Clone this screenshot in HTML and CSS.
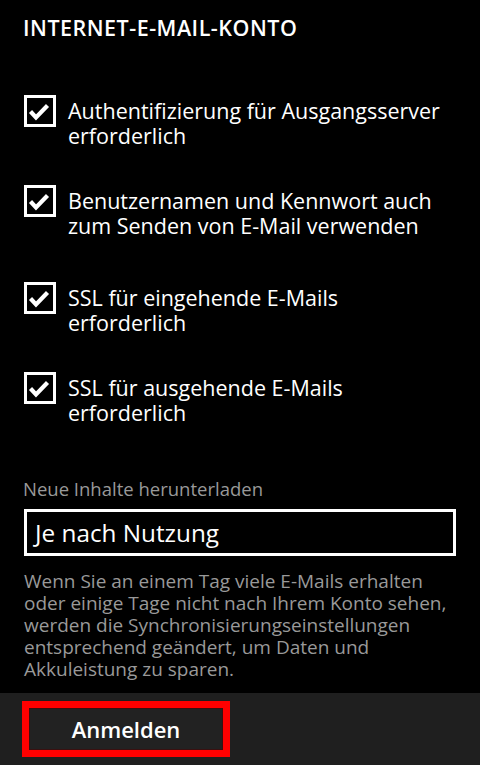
FILE: index.html
```html
<!DOCTYPE html>
<html lang="de">
<head>
<meta charset="utf-8">
<link rel="stylesheet" href="styles.css">
</head>
<body>
<div class="page">
  <h1 class="title">INTERNET-E-MAIL-KONTO</h1>
  <div class="checks">
    <div class="check">
      <span class="box"><svg viewBox="0 0 26 26" width="26" height="26"><path d="M3.5 13.5 L9 19.5 L20.5 7.5" fill="none" stroke="#fff" stroke-width="4.2"/></svg></span>
      <span class="ctext">Authentifizierung für Ausgangsserver<br>erforderlich</span>
    </div>
    <div class="check">
      <span class="box"><svg viewBox="0 0 26 26" width="26" height="26"><path d="M3.5 13.5 L9 19.5 L20.5 7.5" fill="none" stroke="#fff" stroke-width="4.2"/></svg></span>
      <span class="ctext">Benutzernamen und Kennwort auch<br>zum Senden von E-Mail verwenden</span>
    </div>
    <div class="check check-gap">
      <span class="box"><svg viewBox="0 0 26 26" width="26" height="26"><path d="M3.5 13.5 L9 19.5 L20.5 7.5" fill="none" stroke="#fff" stroke-width="4.2"/></svg></span>
      <span class="ctext">SSL für eingehende E-Mails<br>erforderlich</span>
    </div>
    <div class="check">
      <span class="box"><svg viewBox="0 0 26 26" width="26" height="26"><path d="M3.5 13.5 L9 19.5 L20.5 7.5" fill="none" stroke="#fff" stroke-width="4.2"/></svg></span>
      <span class="ctext">SSL für ausgehende E-Mails<br>erforderlich</span>
    </div>
  </div>
  <div class="label">Neue Inhalte herunterladen</div>
  <div class="select">Je nach Nutzung</div>
  <p class="desc">Wenn Sie an einem Tag viele E-Mails erhalten<br>oder einige Tage nicht nach Ihrem Konto sehen,<br>werden die Synchronisierungseinstellungen<br>entsprechend geändert, um Daten und<br>Akkuleistung zu sparen.</p>
</div>
<div class="appbar">
  <button class="btn">Anmelden</button>
</div>
</body>
</html>
```
FILE: styles.css
```css
html, body {
  margin: 0;
  padding: 0;
  background: #000;
  color: #fff;
  font-family: "Open Sans", "Noto Sans", sans-serif;
}
body {
  width: 480px;
  height: 765px;
  overflow: hidden;
  display: flex;
  flex-direction: column;
}
.page {
  flex: 1;
  padding: 0 24px 0 23px;
  white-space: nowrap;
}
.title {
  margin: 15px 0 0;
  font-size: 21.5px;
  font-weight: 600;
  line-height: 26px;
  letter-spacing: 0.5px;
}
.checks {
  margin-top: 54px;
  margin-left: 1px;
  display: flex;
  flex-direction: column;
  gap: 37px;
}
.check {
  display: flex;
  gap: 12px;
  align-items: flex-start;
}
.check-gap {
  margin-top: 7px;
}
.box {
  width: 26px;
  height: 26px;
  border: 3px solid #fff;
  flex: none;
  display: flex;
  align-items: center;
  justify-content: center;
}
.box svg {
  display: block;
  width: 26px;
  height: 26px;
}
.ctext {
  padding-top: 3px;
  font-size: 21.5px;
  line-height: 25px;
}
.label {
  margin-top: 53px;
  color: #999;
  font-size: 18.5px;
  line-height: 22px;
}
.select {
  margin: 9px 0 0 1px;
  height: 41px;
  border: 3px solid #fff;
  font-size: 24.3px;
  line-height: 41px;
  padding-left: 8px;
}
.desc {
  margin: 14px 0 0 1px;
  color: #999;
  font-size: 19px;
  line-height: 22px;
}
.appbar {
  height: 72px;
  background: #1f1f1f;
  flex: none;
  padding: 8px 0 0 22px;
  box-sizing: border-box;
}
.btn {
  width: 208px;
  height: 56px;
  border: 7px solid #ff0000;
  outline: 1px solid #3a1010;
  outline-offset: -8px;
  background: #222;
  color: #fff;
  font-family: "Open Sans", "Noto Sans", sans-serif;
  font-weight: 600;
  font-size: 22px;
  line-height: 40px;
  padding: 0;
  box-sizing: border-box;
}
```
